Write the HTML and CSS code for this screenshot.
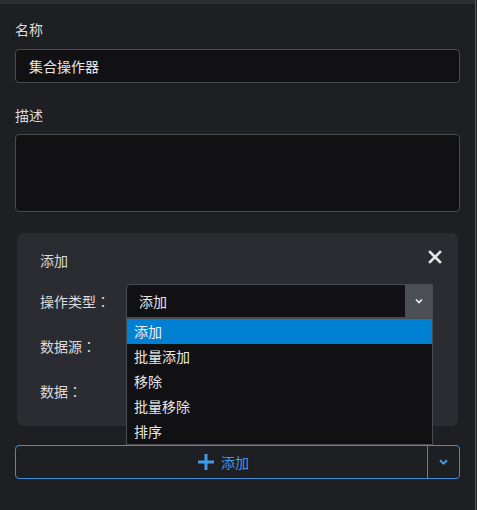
FILE: index.html
```html
<!DOCTYPE html>
<html lang="zh">
<head>
<meta charset="utf-8">
<link rel="stylesheet" href="styles.css">
</head>
<body>
<div class="app">
  <div class="panel">
    <div class="topbar"></div>
    <div class="content">
      <div class="label">名称</div>
      <div class="input">集合操作器</div>
      <div class="label label-desc">描述</div>
      <div class="textarea"></div>

      <div class="card">
        <div class="card-head">
          <span class="card-title">添加</span>
          <svg class="close" width="14" height="14" viewBox="0 0 14 14"><path d="M2 2 L12 12 M12 2 L2 12" stroke="#e6e6e6" stroke-width="2.6" stroke-linecap="square"/></svg>
        </div>
        <div class="row">
          <div class="row-label">操作类型<span class="colon" lang="zh-TW">：</span></div>
          <div class="select-wrap">
            <div class="select">
              <span class="select-value">添加</span>
              <span class="select-btn">
                <svg width="8" height="6" viewBox="0 0 8 6"><path d="M1 1.5 L4 4.5 L7 1.5" fill="none" stroke="#f0f0f0" stroke-width="1.6"/></svg>
              </span>
            </div>
            <div class="menu">
              <div class="item active">添加</div>
              <div class="item">批量添加</div>
              <div class="item">移除</div>
              <div class="item">批量移除</div>
              <div class="item">排序</div>
            </div>
          </div>
        </div>
        <div class="row">
          <div class="row-label">数据源<span class="colon" lang="zh-TW">：</span></div>
          <div class="field"></div>
        </div>
        <div class="row">
          <div class="row-label">数据<span class="colon" lang="zh-TW">：</span></div>
          <div class="field"></div>
        </div>
      </div>

      <div class="split">
        <div class="split-main">
          <svg width="18" height="18" viewBox="0 0 18 18"><path d="M9 1 V17 M1 9 H17" stroke="#3d9be9" stroke-width="3"/></svg>
          <span>添加</span>
        </div>
        <div class="split-arrow">
          <svg width="9" height="6" viewBox="0 0 9 6"><path d="M1 1.2 L4.5 4.6 L8 1.2" fill="none" stroke="#3d9be9" stroke-width="2"/></svg>
        </div>
      </div>
    </div>
  </div>
  <div class="scroll"></div>
</div>
</body>
</html>
```

FILE: styles.css
```css
* { box-sizing: border-box; }
html, body {
  margin: 0;
  height: 100%;
  background: #1e1f22;
  font-family: "Noto Sans CJK SC", "Noto Sans", sans-serif;
  font-size: 14px;
  color: #d8d8d8;
}
.app {
  display: flex;
  height: 100%;
}
.panel {
  flex: 1;
}
.topbar {
  height: 4px;
  background: #2b2d31;
}
.scroll {
  width: 2px;
  border-left: 1px solid #55565c;
  background: #1e1f22;
}
.content {
  padding: 15px 15px 0 15px;
}
.label {
  line-height: 20px;
  height: 20px;
  color: #dcdcdc;
}
.input {
  margin-top: 10px;
  height: 34px;
  background: #111113;
  border: 1px solid #4a4b51;
  border-radius: 4px;
  padding: 0 13px;
  line-height: 32px;
  color: #e6e6e6;
}
.label-desc {
  margin-top: 22px;
}
.textarea {
  margin-top: 9px;
  height: 78px;
  background: #111113;
  border: 1px solid #4a4b51;
  border-radius: 4px;
}
.card {
  margin: 21px 2px 0 2px;
  background: #2b2c31;
  border-radius: 6px;
  padding: 17px 25px 18px 23px;
  display: flex;
  flex-direction: column;
  gap: 11px;
}
.card-head {
  display: flex;
  justify-content: space-between;
  align-items: center;
  height: 20px;
  margin-bottom: 3px;
  line-height: 20px;
}
.card-title { color: #dcdcdc; }
.close { margin-right: -9px; margin-top: -6px; }
.row {
  display: flex;
  align-items: center;
  height: 34px;
}
.row-label {
  width: 86px;
  color: #dcdcdc;
}
.colon {
  font-family: "Noto Sans CJK TC", "Noto Sans CJK SC", sans-serif;
}
.select-wrap {
  position: relative;
  flex: 1;
}
.select {
  height: 34px;
  display: flex;
  background: #111113;
  border: 1px solid #4a4b51;
  border-radius: 4px 0 0 0;
}
.select-value {
  flex: 1;
  padding-left: 12px;
  line-height: 32px;
  color: #e6e6e6;
}
.select-btn {
  width: 27px;
  background: #4d4f57;
  display: flex;
  align-items: center;
  justify-content: center;
}
.menu {
  position: absolute;
  left: 0;
  right: 0;
  top: 34px;
  background: #111113;
  border: 1px solid #4a4b51;
  z-index: 5;
}
.item {
  height: 25px;
  line-height: 25px;
  padding-left: 7px;
  color: #e6e6e6;
}
.item.active {
  background: #0080d2;
  color: #f2f2f2;
}
.field {
  flex: 1;
  height: 34px;
}
.split {
  margin-top: 19px;
  height: 34px;
  display: flex;
  border: 1px solid #3a8fdc;
  border-radius: 4px;
}
.split-main {
  flex: 1;
  display: flex;
  align-items: center;
  justify-content: center;
  gap: 6px;
  color: #3d9be9;
  border-right: 1px solid #3a8fdc;
  padding-left: 3px;
}
.split-main span { line-height: 20px; }
.split-arrow {
  width: 31px;
  display: flex;
  align-items: center;
  justify-content: center;
}
```
